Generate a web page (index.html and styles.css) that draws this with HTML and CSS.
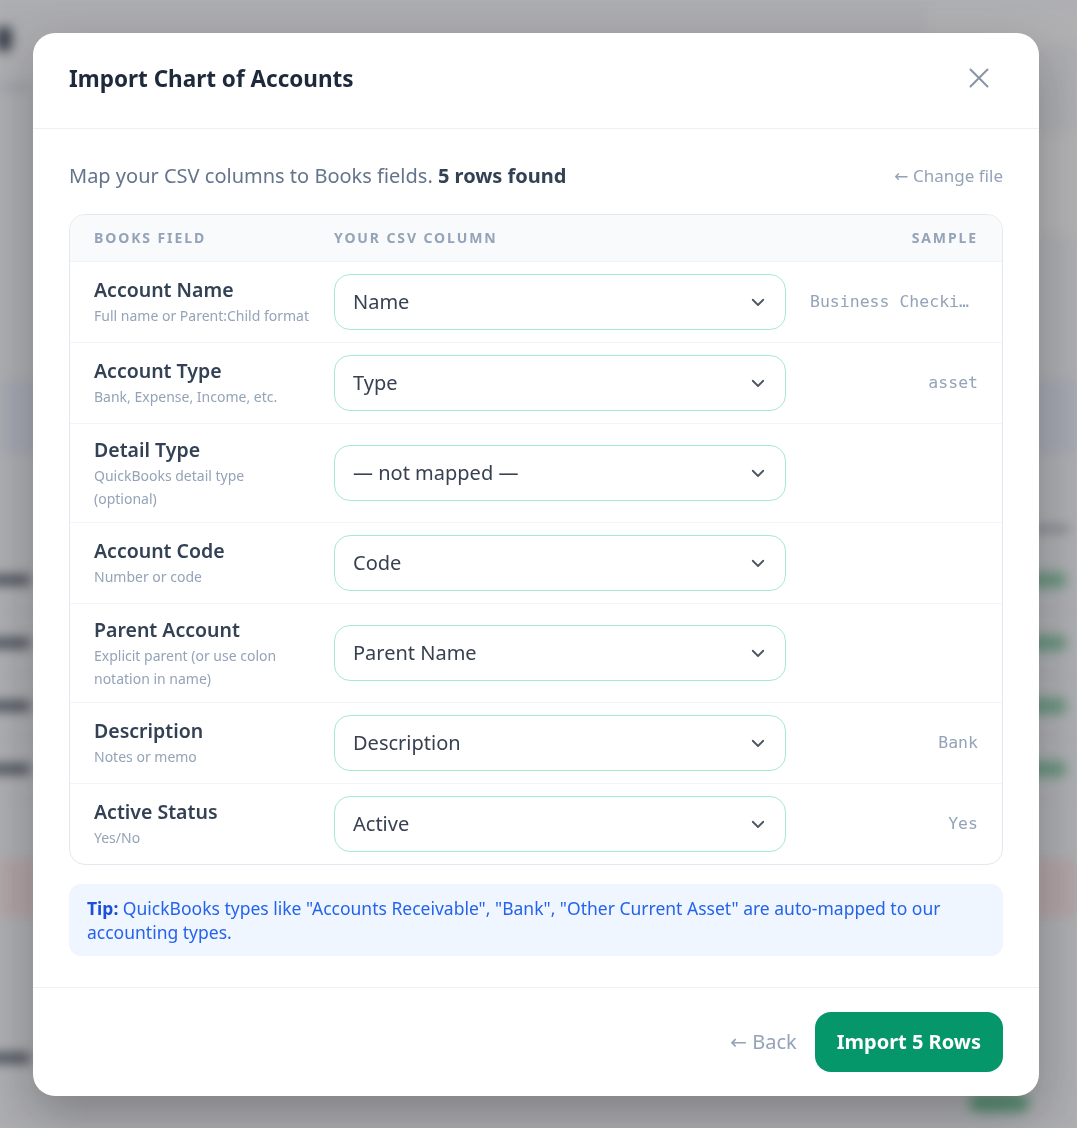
FILE: index.html
```html
<!DOCTYPE html>
<html lang="en">
<head>
    <meta charset="UTF-8">
    <meta name="viewport" content="width=device-width, initial-scale=1.0">
    <title>Chart of Accounts</title>
    <link rel="stylesheet" href="styles.css">
</head>
<body>
    <!-- accounts page behind the dialog -->
    <div class="page">
        <div class="page-top">
            <span class="logo"></span>
            <span class="top-card"></span>
        </div>
        <div class="page-sub"><span class="crumb"></span></div>
        <div class="page-summary"><span class="summary-card"></span></div>
        <div class="page-spacer"></div>
        <div class="page-filter"></div>
        <div class="page-spacer mid"></div>
        <div class="page-th"><span class="th-text"></span></div>
        <div class="page-row"><span class="row-name"></span><span class="row-badge"></span></div>
        <div class="page-row"><span class="row-name"></span><span class="row-badge"></span></div>
        <div class="page-row"><span class="row-name"></span><span class="row-badge"></span></div>
        <div class="page-row"><span class="row-name"></span><span class="row-badge"></span></div>
        <div class="page-spacer short"></div>
        <div class="page-alert"></div>
        <div class="page-spacer low"></div>
        <div class="page-row"><span class="row-name"></span></div>
        <div class="page-foot"><span class="foot-badge"></span></div>
    </div>

    <div class="overlay">
        <div class="modal">
            <header class="modal-head">
                <h2>Import Chart of Accounts</h2>
                <button class="close" aria-label="Close">
                    <svg width="24" height="24" viewBox="0 0 24 24" fill="none" stroke="currentColor" stroke-width="2" stroke-linecap="round"><path d="M3.5 3.5l17 17M20.5 3.5l-17 17"/></svg>
                </button>
            </header>

            <div class="modal-body">
                <div class="intro">
                    <p>Map your CSV columns to Books fields. <strong>5 rows found</strong></p>
                    <a class="change-file" href="#"><span class="arrow">&larr;</span> Change file</a>
                </div>

                <div class="map-table">
                    <div class="map-row map-head">
                        <span>Books field</span>
                        <span>Your CSV column</span>
                        <span class="head-sample">Sample</span>
                    </div>

                    <div class="map-row">
                        <div class="field">
                            <div class="field-name">Account Name</div>
                            <div class="field-hint">Full name or Parent:Child format</div>
                        </div>
                        <div class="select-wrap">
                            <select><option>Name</option></select>
                            <svg class="chevron" width="18" height="18" viewBox="0 0 24 24" fill="none" stroke="currentColor" stroke-width="2.4" stroke-linecap="round" stroke-linejoin="round"><path d="M5 9l7 7 7-7"/></svg>
                        </div>
                        <div class="sample">Business Checking</div>
                    </div>

                    <div class="map-row">
                        <div class="field">
                            <div class="field-name">Account Type</div>
                            <div class="field-hint">Bank, Expense, Income, etc.</div>
                        </div>
                        <div class="select-wrap">
                            <select><option>Type</option></select>
                            <svg class="chevron" width="18" height="18" viewBox="0 0 24 24" fill="none" stroke="currentColor" stroke-width="2.4" stroke-linecap="round" stroke-linejoin="round"><path d="M5 9l7 7 7-7"/></svg>
                        </div>
                        <div class="sample">asset</div>
                    </div>

                    <div class="map-row">
                        <div class="field">
                            <div class="field-name">Detail Type</div>
                            <div class="field-hint">QuickBooks detail type (optional)</div>
                        </div>
                        <div class="select-wrap">
                            <select><option>&mdash; not mapped &mdash;</option></select>
                            <svg class="chevron" width="18" height="18" viewBox="0 0 24 24" fill="none" stroke="currentColor" stroke-width="2.4" stroke-linecap="round" stroke-linejoin="round"><path d="M5 9l7 7 7-7"/></svg>
                        </div>
                        <div class="sample"></div>
                    </div>

                    <div class="map-row">
                        <div class="field">
                            <div class="field-name">Account Code</div>
                            <div class="field-hint">Number or code</div>
                        </div>
                        <div class="select-wrap">
                            <select><option>Code</option></select>
                            <svg class="chevron" width="18" height="18" viewBox="0 0 24 24" fill="none" stroke="currentColor" stroke-width="2.4" stroke-linecap="round" stroke-linejoin="round"><path d="M5 9l7 7 7-7"/></svg>
                        </div>
                        <div class="sample"></div>
                    </div>

                    <div class="map-row">
                        <div class="field">
                            <div class="field-name">Parent Account</div>
                            <div class="field-hint">Explicit parent (or use colon notation in name)</div>
                        </div>
                        <div class="select-wrap">
                            <select><option>Parent Name</option></select>
                            <svg class="chevron" width="18" height="18" viewBox="0 0 24 24" fill="none" stroke="currentColor" stroke-width="2.4" stroke-linecap="round" stroke-linejoin="round"><path d="M5 9l7 7 7-7"/></svg>
                        </div>
                        <div class="sample"></div>
                    </div>

                    <div class="map-row">
                        <div class="field">
                            <div class="field-name">Description</div>
                            <div class="field-hint">Notes or memo</div>
                        </div>
                        <div class="select-wrap">
                            <select><option>Description</option></select>
                            <svg class="chevron" width="18" height="18" viewBox="0 0 24 24" fill="none" stroke="currentColor" stroke-width="2.4" stroke-linecap="round" stroke-linejoin="round"><path d="M5 9l7 7 7-7"/></svg>
                        </div>
                        <div class="sample">Bank</div>
                    </div>

                    <div class="map-row">
                        <div class="field">
                            <div class="field-name">Active Status</div>
                            <div class="field-hint">Yes/No</div>
                        </div>
                        <div class="select-wrap">
                            <select><option>Active</option></select>
                            <svg class="chevron" width="18" height="18" viewBox="0 0 24 24" fill="none" stroke="currentColor" stroke-width="2.4" stroke-linecap="round" stroke-linejoin="round"><path d="M5 9l7 7 7-7"/></svg>
                        </div>
                        <div class="sample">Yes</div>
                    </div>
                </div>

                <p class="tip"><strong>Tip:</strong> QuickBooks types like "Accounts Receivable", "Bank", "Other Current Asset" are auto-mapped to our accounting types.</p>
            </div>

            <footer class="modal-foot">
                <button class="back"><span class="arrow">&larr;</span> Back</button>
                <button class="primary">Import 5 Rows</button>
            </footer>
        </div>
    </div>
</body>
</html>
```

FILE: styles.css
```css
* {
    box-sizing: border-box;
}
body {
    margin: 0;
    font-family: "Noto Sans", "Open Sans", sans-serif;
    background-color: #f8fafc;
    overflow: hidden;
}

/* page behind the dialog */
.page {
    filter: blur(6px);
    height: 100vh;
    background-color: #f3f4f6;
}
.page-top {
    height: 90px;
    display: flex;
    justify-content: space-between;
    align-items: center;
}
.logo {
    width: 16px;
    height: 26px;
    border-radius: 8px;
    background-color: #374151;
    margin-left: -4px;
    margin-top: -12px;
}
.top-card {
    width: 150px;
    height: 40px;
    border-radius: 8px;
    background-color: #fafafa;
    margin-top: -40px;
}
.page-sub {
    height: 50px;
}
.crumb {
    display: block;
    width: 30px;
    height: 6px;
    background-color: #cbd5e1;
    margin-top: -6px;
}
.page-summary {
    height: 100px;
    display: flex;
    justify-content: flex-end;
}
.summary-card {
    width: 90px;
    height: 100px;
    background-color: #fbfbfb;
    border-radius: 10px;
    margin-right: -30px;
}
.page-spacer {
    height: 145px;
}
.page-spacer.mid {
    height: 55px;
}
.page-spacer.short {
    height: 58px;
}
.page-spacer.low {
    height: 110px;
}
.page-filter {
    height: 75px;
    background-color: #e6ebf5;
}
.page-th {
    height: 40px;
    display: flex;
    justify-content: flex-end;
    align-items: center;
}
.th-text {
    width: 40px;
    height: 6px;
    margin-right: 8px;
    background-color: #9ca3af;
}
.page-row {
    height: 63px;
    display: flex;
    justify-content: space-between;
    align-items: center;
    border-bottom: 1px solid #e5e7eb;
}
.row-name {
    width: 40px;
    height: 10px;
    background-color: #4b5563;
    margin-left: -10px;
}
.row-badge {
    width: 40px;
    height: 16px;
    border-radius: 8px;
    background-color: #86c9a5;
    margin-right: 10px;
}
.page-alert {
    height: 58px;
    background-color: #f8e3e3;
}
.page-foot {
    height: 60px;
    display: flex;
    justify-content: flex-end;
}
.foot-badge {
    width: 60px;
    height: 18px;
    border-radius: 9px;
    background-color: #6cc596;
    margin-right: 48px;
    margin-top: 4px;
}

/* dialog */
.overlay {
    position: fixed;
    inset: 0;
    background-color: rgba(55, 55, 60, 0.38);
    display: flex;
    align-items: center;
    justify-content: center;
    padding-right: 5px;
}
.modal {
    width: 1006px;
    background-color: white;
    border-radius: 22px;
    box-shadow: 0 20px 50px rgba(0, 0, 0, 0.25);
}
.modal-head {
    height: 96px;
    display: flex;
    align-items: center;
    justify-content: space-between;
    padding: 0 48px 4px 36px;
    border-bottom: 1px solid #eef0f3;
}
.modal-head h2 {
    margin: 0;
    font-size: 22.5px;
    font-weight: 700;
    color: #1e293b;
}
.close {
    border: none;
    background: none;
    padding: 0;
    color: #8b95a7;
    display: flex;
    cursor: pointer;
}
.modal-body {
    padding: 33px 36px 31px;
}
.intro {
    display: flex;
    justify-content: space-between;
    align-items: center;
    margin-bottom: 24px;
}
.intro p {
    margin: 0;
    font-size: 20px;
    color: #64748b;
    line-height: 28px;
}
.intro strong {
    color: #334155;
}
.change-file {
    font-size: 17px;
    color: #94a3b8;
    text-decoration: none;
}
.arrow {
    font-family: "DejaVu Sans", sans-serif;
}
.map-table {
    border: 1px solid #e2e8f0;
    border-radius: 16px;
    overflow: hidden;
}
.map-row {
    display: grid;
    grid-template-columns: 216px 452px 1fr;
    column-gap: 24px;
    align-items: center;
    padding: 12px 24px;
    border-top: 1px solid #f1f5f9;
}
.map-head {
    border-top: none;
    padding: 14px 24px;
    background-color: #f8fafc;
    font-size: 14px;
    font-weight: 700;
    letter-spacing: 1.9px;
    text-transform: uppercase;
    color: #94a3b8;
    line-height: 18px;
}
.head-sample {
    text-align: right;
}
.field-name {
    font-size: 19.5px;
    font-weight: 600;
    color: #334155;
    line-height: 28px;
}
.field-hint {
    font-size: 14px;
    color: #94a3b8;
    line-height: 23px;
}
.select-wrap {
    position: relative;
}
.select-wrap select {
    width: 100%;
    height: 56px;
    appearance: none;
    border: 1px solid #a7e9cd;
    border-radius: 16px;
    background-color: white;
    padding: 0 48px 0 18px;
    font-family: inherit;
    font-size: 20px;
    color: #374151;
}
.chevron {
    position: absolute;
    right: 19px;
    top: 19px;
    color: #4b5563;
    pointer-events: none;
}
.sample {
    text-align: right;
    font-family: "DejaVu Sans Mono", "Liberation Mono", monospace;
    font-size: 16.5px;
    color: #94a3b8;
    white-space: nowrap;
    overflow: hidden;
    text-overflow: ellipsis;
}
.tip {
    margin: 19px 0 0;
    padding: 12px 18px;
    background-color: #eff6ff;
    border-radius: 12px;
    font-size: 17.5px;
    line-height: 24px;
    color: #2563eb;
}
.tip strong {
    color: #1d4ed8;
}
.modal-foot {
    display: flex;
    justify-content: flex-end;
    align-items: center;
    gap: 18px;
    padding: 24px 36px 24px;
    border-top: 1px solid #eef0f3;
}
.back {
    border: none;
    background: none;
    font-family: inherit;
    font-size: 20px;
    color: #94a3b8;
    cursor: pointer;
    padding: 0;
}
.primary {
    height: 60px;
    padding: 0 22px;
    border: none;
    border-radius: 16px;
    background-color: #059669;
    color: white;
    font-family: inherit;
    font-size: 20px;
    font-weight: 700;
    cursor: pointer;
}
```
